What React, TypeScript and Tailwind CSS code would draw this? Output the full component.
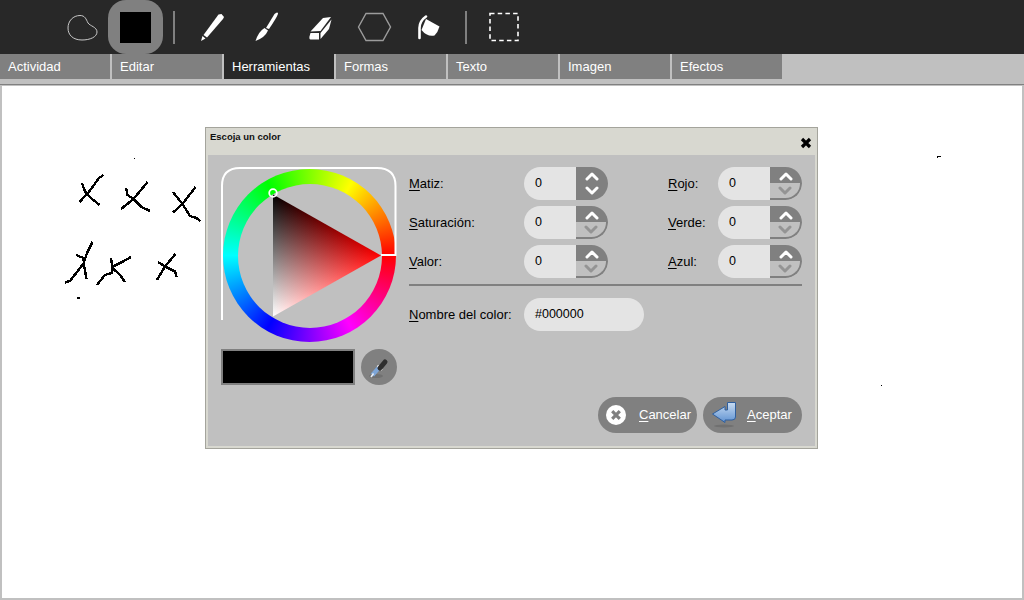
const tabs = ["Actividad", "Editar", "Herramientas", "Formas", "Texto", "Imagen", "Efectos"];

// pen strokes left on the canvas, in page coordinates
const strokes = [
  "M79.5 202 L88.5 192.5 L95 183.5 L99 178 L103.5 175",
  "M82 183 L85 191.5 L91.5 198.5 L99.5 205",
  "M121 209 L133.5 199 L147.5 182",
  "M126 188 L127.5 195 L133.5 199 L141.5 207 L150 211",
  "M173 212.5 L182.5 204 L195.5 187",
  "M173 192 L182.5 204 L190 216 L196.5 218 L200.5 221",
  "M65 282.5 L70 281 L83.5 263.5 L87 253 L92.5 242",
  "M76 255 L83.5 258 L84 265 L86.5 279",
  "M97 285 L105 275 L111.5 273 L113 266.5 L122 262 L131 257",
  "M111 258 L112.5 268 L120 275 L125 282",
  "M157 280 L165 266.5 L175.5 254",
  "M158 262 L165 266.5 L175 271.5 L176.5 277",
];

function ToolIcon({ x, w, children, className }: { x: number; w: number; children: React.ReactNode; className?: string }) {
  return (
    <svg viewBox={`${x} 0 ${w} 54`} width={w} height={54} className={`shrink-0 ${className ?? ""}`}>
      {children}
    </svg>
  );
}

function Chevron({ up, color }: { up?: boolean; color: string }) {
  return (
    <svg width="14" height="9" viewBox="0 0 14 9">
      <path
        d={up ? "M2 7 L7 2 L12 7" : "M2 2 L7 7 L12 2"}
        fill="none"
        stroke={color}
        strokeWidth="3"
        strokeLinecap="round"
        strokeLinejoin="round"
      />
    </svg>
  );
}

function Spin({ downEnabled }: { downEnabled?: boolean }) {
  return (
    <div className="flex h-[33px] w-[84px] shrink-0">
      <div className="flex w-[52px] items-center rounded-l-[16.5px] bg-[#e4e4e4] pl-[11px] text-[12.5px] text-black">0</div>
      <div className="flex w-[32px] flex-col overflow-hidden rounded-r-[16.5px]">
        <div className="flex h-[16px] items-center justify-center bg-[#808080] pt-[3px]">
          <Chevron up color="#ffffff" />
        </div>
        {downEnabled ? (
          <div className="flex h-[17px] items-center justify-center bg-[#808080] pb-[3px]">
            <Chevron color="#ffffff" />
          </div>
        ) : (
          <div className="flex h-[17px] items-center justify-center rounded-br-[16.5px] border-r-2 border-b-2 border-[#808080] pb-[1px]">
            <Chevron color="#949494" />
          </div>
        )}
      </div>
    </div>
  );
}

function Label({ k, rest, className }: { k: string; rest: string; className: string }) {
  return (
    <div className={`shrink-0 text-[13px] text-black ${className}`}>
      <span className="underline underline-offset-2">{k}</span>
      {rest}
    </div>
  );
}

function ColorWheel() {
  return (
    <div className="relative h-[178px] w-[176px]">
      <div className="absolute top-[2px] left-[2px] flex h-[173px] w-[173px] items-center justify-center rounded-full bg-[conic-gradient(from_90deg,#ff0000,#ff00ff,#0000ff,#00ffff,#00ff00,#ffff00,#ff0000)]">
        <div className="h-[144px] w-[144px] rounded-full bg-[#c0c0c0]" />
      </div>
      <svg viewBox="221 167 176 178" className="absolute inset-0 h-[178px] w-[176px]">
        <defs>
          <linearGradient id="redRamp" gradientUnits="userSpaceOnUse" x1="273" y1="0" x2="381" y2="0">
            <stop offset="0" stopColor="#000000" />
            <stop offset="1" stopColor="#ff0000" />
          </linearGradient>
          <linearGradient id="whiteRamp" gradientUnits="userSpaceOnUse" x1="325.2" y1="223.5" x2="273" y2="316.5">
            <stop offset="0" stopColor="#000000" />
            <stop offset="1" stopColor="#ffffff" />
          </linearGradient>
          <clipPath id="triangleClip">
            <polygon points="273,194.5 273,316.5 381,255.5" />
          </clipPath>
        </defs>
        <g clipPath="url(#triangleClip)" className="isolate">
          <rect x="270" y="190" width="115" height="130" fill="url(#redRamp)" />
          <rect x="270" y="190" width="115" height="130" fill="url(#whiteRamp)" className="mix-blend-plus-lighter" />
        </g>
        <path d="M222 320 V186 Q222 168 240 168 H377 Q395.5 168 395.5 186 V255 H381" fill="none" stroke="#ffffff" strokeWidth="2" />
        <circle cx="273" cy="193" r="3.8" fill="none" stroke="#ffffff" strokeWidth="1.8" />
      </svg>
    </div>
  );
}

export default function App() {
  return (
    <div className="relative flex h-[600px] w-[1024px] flex-col overflow-hidden bg-[#c0c0c0] font-['Liberation_Sans',Arial,sans-serif]">
      {/* Toolbar */}
      <div className="flex h-[54px] shrink-0 items-center bg-[#282828] pl-[67px]">
        <ToolIcon x={67} w={31}>
          <path
            d="M80 15.5 C73 15.5 68 21 68 28 C68 35 73 40 82 40 C90 40 97 37 97 32 C97 27 90 26 88 23 C86 19 85 15.5 80 15.5 Z"
            fill="none"
            stroke="#c8c8c8"
            strokeWidth="1"
          />
        </ToolIcon>
        <div className="ml-[10px] flex h-[54px] w-[55px] shrink-0 items-center justify-center rounded-[18px] bg-[#808080]">
          <div className="h-[31px] w-[31px] bg-black" />
        </div>
        <div className="ml-[10px] h-[33px] w-[2px] shrink-0 bg-[#808080]" />
        <ToolIcon x={200} w={25} className="ml-[25px]">
          <path d="M218.5 14.5 L221.5 14 L224 17 L223 19 L207 37.5 L203.5 35 Z" fill="#ffffff" />
          <path d="M202.5 36 L205.5 38.5 L201 41 Z" fill="#ffffff" />
        </ToolIcon>
        <ToolIcon x={255} w={24} className="ml-[30px]">
          <path d="M274.5 14 Q277 11.5 278 13 Q278.5 15 269 29 L266 28 Z" fill="#ffffff" />
          <path d="M264.5 28 L268 30.5 Q265 37.5 255.5 41 Q258.5 31.5 264.5 28 Z" fill="#ffffff" />
        </ToolIcon>
        <ToolIcon x={309} w={23} className="ml-[30px]">
          <path d="M323 18 L331 17 L320.5 31 L310.5 31.5 Z" fill="#ffffff" />
          <path d="M310.5 33 H319 V39.5 H310.5 Q309 39.5 309.5 36.5 Z" fill="#ffffff" />
          <path d="M331.5 19.5 L329 29 L320.5 39 V33 Z" fill="#ffffff" />
        </ToolIcon>
        <ToolIcon x={357} w={35} className="ml-[25px]">
          <polygon points="358.5,27 366,13.5 383,13.5 390.5,27 383,40.5 366,40.5" fill="none" stroke="#9c9c9c" strokeWidth="1.4" />
        </ToolIcon>
        <ToolIcon x={417} w={24} className="ml-[25px]">
          <path d="M426 19 L439.5 26.5 Q438 32 434.5 35.5 Q427 37 421.5 30 Z" fill="#ffffff" />
          <path d="M426 16.5 Q419.5 21 419.5 28 V38" fill="none" stroke="#ffffff" strokeWidth="2.6" strokeLinecap="round" />
        </ToolIcon>
        <div className="ml-[24px] h-[33px] w-[2px] shrink-0 bg-[#808080]" />
        <ToolIcon x={489} w={31} className="ml-[22px]">
          <rect x="490" y="13.5" width="28" height="27" fill="none" stroke="#ffffff" strokeWidth="1.6" strokeDasharray="4.5 3.2" />
        </ToolIcon>
      </div>

      {/* Tabs */}
      <div className="flex h-[25px] shrink-0 gap-[2px]">
        {tabs.map((t) => (
          <div
            key={t}
            className={`flex w-[110px] items-center pl-[8px] text-[13px] text-white ${
              t === "Herramientas" ? "bg-[#282828]" : "bg-[#808080]"
            }`}
          >
            {t}
          </div>
        ))}
      </div>

      {/* Canvas */}
      <div className="mt-[5px] h-[2px] shrink-0 border-t border-[#808080]" />
      <div className="mx-[2px] mb-[2px] flex-1 bg-white" />

      <svg viewBox="0 0 1024 600" className="absolute inset-0 h-[600px] w-[1024px]" shapeRendering="crispEdges">
        {strokes.map((d, i) => (
          <path key={i} d={d} fill="none" stroke="#000000" strokeWidth="2.4" />
        ))}
        <rect x="134" y="158" width="1" height="1" fill="#000000" />
        <rect x="77" y="297" width="3" height="2" fill="#000000" />
        <rect x="937" y="156" width="4" height="1" fill="#000000" />
        <rect x="937" y="156" width="1" height="2" fill="#000000" />
        <rect x="881" y="385" width="1" height="1" fill="#000000" />
      </svg>

      {/* Color dialog */}
      <div className="absolute top-[127px] left-[205px] flex h-[322px] w-[613px] flex-col border border-[#a4a49c] bg-[#d8d8d0] p-[2px]">
        <div className="flex h-[25px] shrink-0 justify-between pl-[2px]">
          <span className="text-[9.5px] leading-[13px] font-bold text-[#111111]">Escoja un color</span>
          <svg width="12" height="12" viewBox="0 0 12 12" className="mt-[7px] mr-[3px]">
            <path d="M2 2 L10 10 M10 2 L2 10" stroke="#000000" strokeWidth="3.2" />
          </svg>
        </div>
        <div className="flex flex-1 bg-[#c0c0c0] pt-[12px] pl-[13px]">
          <div className="w-[176px] shrink-0">
            <ColorWheel />
            <div className="mt-[4px] flex gap-[6px]">
              <div className="h-[36px] w-[134px] border-2 border-[#808080] bg-black" />
              <div className="flex h-[36px] w-[36px] items-center justify-center rounded-full bg-[#808080]">
                <svg viewBox="361 349 36 36" width="36" height="36">
                  <ellipse cx="376" cy="376" rx="7" ry="2" fill="#707070" />
                  <path d="M372.5 375 L379 367.5" stroke="#7ea6d8" strokeWidth="4.2" />
                  <path d="M371 377 L373.5 373.5" stroke="#e8eef6" strokeWidth="1.6" />
                  <path d="M377.5 365.5 L382 370" stroke="#f0f0f0" strokeWidth="2" />
                  <path d="M380 368 L385 362" stroke="#2e2e2e" strokeWidth="5" strokeLinecap="round" />
                </svg>
              </div>
            </div>
          </div>

          <div className="ml-[12px] w-[393px]">
            <div className="flex flex-col gap-[6px]">
              <div className="flex items-center">
                <Label k="M" rest="atiz:" className="w-[115px]" />
                <Spin downEnabled />
                <Label k="R" rest="ojo:" className="ml-[60px] w-[50px]" />
                <Spin />
              </div>
              <div className="flex items-center">
                <Label k="S" rest="aturación:" className="w-[115px]" />
                <Spin />
                <Label k="V" rest="erde:" className="ml-[60px] w-[50px]" />
                <Spin />
              </div>
              <div className="flex items-center">
                <Label k="V" rest="alor:" className="w-[115px]" />
                <Spin />
                <Label k="A" rest="zul:" className="ml-[60px] w-[50px]" />
                <Spin />
              </div>
            </div>

            <div className="mt-[6px] h-[2px] bg-[#808080]" />

            <div className="mt-[12px] flex items-center">
              <Label k="N" rest="ombre del color:" className="w-[115px]" />
              <div className="flex h-[33px] w-[120px] items-center rounded-[16.5px] bg-[#e4e4e4] pl-[11px] text-[12.5px] text-black">#000000</div>
            </div>

            <div className="mt-[66px] flex justify-end gap-[6px]">
              <div className="flex h-[36px] w-[99px] items-center rounded-[18px] bg-[#808080] pl-[8px] text-[13px] text-white">
                <svg width="20" height="20" viewBox="0 0 20 20" className="shrink-0">
                  <circle cx="10" cy="10" r="10" fill="#ffffff" />
                  <path d="M6.2 6.2 L13.8 13.8 M13.8 6.2 L6.2 13.8" stroke="#808080" strokeWidth="3.2" />
                </svg>
                <span className="ml-[13px]">
                  <span className="underline underline-offset-2">C</span>ancelar
                </span>
              </div>
              <div className="flex h-[36px] w-[99px] items-center rounded-[18px] bg-[#808080] pl-[8px] text-[13px] text-white">
                <svg viewBox="711 401 28 30" width="28" height="30" className="shrink-0">
                  <defs>
                    <linearGradient id="returnFill" x1="0" y1="0" x2="0" y2="1">
                      <stop offset="0" stopColor="#c8dcf2" />
                      <stop offset="1" stopColor="#5f92d2" />
                    </linearGradient>
                  </defs>
                  <ellipse cx="724" cy="427" rx="10" ry="1.5" fill="#707070" />
                  <path
                    d="M712.5 415 L725 407.5 V411 H727.5 V403.5 H735.5 V418 Q735.5 421 732 421 H725 V423.5 Z"
                    fill="url(#returnFill)"
                    stroke="#2f5f9e"
                    strokeWidth="1"
                  />
                </svg>
                <span className="ml-[8px]">
                  <span className="underline underline-offset-2">A</span>ceptar
                </span>
              </div>
            </div>
          </div>
        </div>
      </div>
    </div>
  );
}
